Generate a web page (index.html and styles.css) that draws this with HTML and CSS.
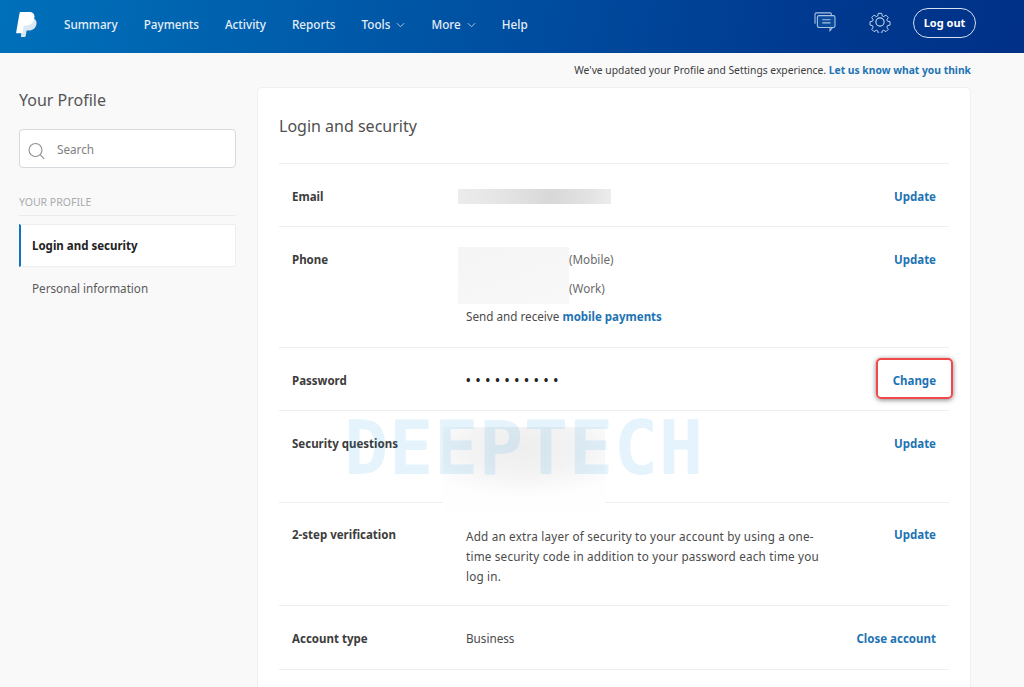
FILE: index.html
```html
<!DOCTYPE html>
<html lang="en">
<head>
<meta charset="utf-8">
<title>Your Profile</title>
<link rel="stylesheet" href="styles.css">
</head>
<body>
<header class="topbar">
  <svg class="logo" viewBox="0 0 22 25" width="22" height="25" aria-hidden="true">
    <path fill="#dbe8f3" d="M7 6h7.500c4 0 6.600 2.200 6 6-.7 4.300-3.700 6.500-7.600 6.500h-2.200L9.600 24.300c-.1.500-.4.700-.9.700H4.900z"/>
    <path fill="#fff" d="M5 0h8c3.600 0 6 2 5.400 5.800-.8 5-4 7.700-8.400 7.700H7.700l-1.100 7c-.1.500-.4.700-.9.700H1c-.6 0-.9-.4-.8-1L3.500 1.200C3.600.4 4.200 0 5 0z"/>
  </svg>
  <nav class="nav">
    <a>Summary</a>
    <a>Payments</a>
    <a>Activity</a>
    <a>Reports</a>
    <a>Tools <svg class="caret" viewBox="0 0 10 6" width="9" height="6"><path d="M1 1l4 4 4-4" fill="none" stroke="#b9cfe6" stroke-width="1"/></svg></a>
    <a>More <svg class="caret" viewBox="0 0 10 6" width="9" height="6"><path d="M1 1l4 4 4-4" fill="none" stroke="#b9cfe6" stroke-width="1"/></svg></a>
    <a>Help</a>
  </nav>
  <div class="tools">
    <svg class="chat" viewBox="0 0 24 22" width="22" height="20" fill="none" stroke="#a9c4e2" stroke-width="1.200" aria-hidden="true">
      <path d="M1 13V2.400C1 1.600 1.600 1 2.400 1h15.200c.8 0 1.400.6 1.400 1.400V4"/>
      <rect x="3.600" y="4" width="19.400" height="13" rx="1.800" fill="#0a4b9b"/>
      <path d="M9 8.500h9M9 12h9"/>
      <path d="M17.500 17v3.500l3-3.500"/>
    </svg>
    <svg class="gear" viewBox="0 0 24 24" width="22" height="22" fill="none" stroke="#c3d6ea" stroke-width="1.200" aria-hidden="true">
      <circle cx="12" cy="12" r="4.500"/>
      <path d="M10 1.500h4l.7 3.100 1.800.8 2.700-1.700 2.800 2.800-1.700 2.700.8 1.800 3.100.7v4l-3.100.7-.8 1.800 1.700 2.700-2.800 2.800-2.700-1.700-1.800.8-.7 3h-4l-.7-3-1.800-.8-2.700 1.700-2.800-2.800 1.700-2.700-.8-1.800-3-.7v-4l3-.7.8-1.800-1.700-2.700 2.800-2.800 2.700 1.700 1.800-.8z" transform="translate(1.200 1.200) scale(.9)"/>
    </svg>
    <a class="logout">Log out</a>
  </div>
</header>

<div class="notice">We've updated your Profile and Settings experience. <a class="link">Let us know what you think</a></div>

<div class="page">
  <aside class="side">
    <h1 class="side-title">Your Profile</h1>
    <div class="search">
      <svg viewBox="0 0 18 18" width="18" height="18" fill="none" stroke="#8f9092" stroke-width="1.100" aria-hidden="true"><circle cx="7.500" cy="8" r="6.500"/><path d="M12.300 12.800l4 4"/></svg>
      <span>Search</span>
    </div>
    <div class="side-head">YOUR PROFILE</div>
    <a class="side-item active">Login and security</a>
    <a class="side-item">Personal information</a>
  </aside>

  <main class="card">
    <h2 class="card-title">Login and security</h2>
    <section class="row r-email">
      <div class="label">Email</div>
      <div class="value"><div class="blur-email"></div></div>
      <a class="link action">Update</a>
    </section>
    <section class="row r-phone">
      <div class="label">Phone</div>
      <div class="value">
        <div class="phones">
          <div class="blur-phone"></div>
          <div class="phone-tags"><span>(Mobile)</span><span>(Work)</span></div>
        </div>
        <div class="send">Send and receive <a class="link">mobile payments</a></div>
      </div>
      <a class="link action">Update</a>
    </section>
    <section class="row r-pass">
      <div class="label">Password</div>
      <div class="value dots">••••••••••</div>
      <a class="link action highlighted">Change</a>
    </section>
    <section class="row r-sec">
      <div class="label">Security questions</div>
      <div class="value"></div>
      <a class="link action">Update</a>
      <div class="blur-sec"></div>
    </section>
    <section class="row r-two">
      <div class="label">2-step verification</div>
      <div class="value para">Add an extra layer of security to your account by using a one-time security code in addition to your password each time you log in.</div>
      <a class="link action">Update</a>
    </section>
    <section class="row r-type">
      <div class="label">Account type</div>
      <div class="value">Business</div>
      <a class="link action">Close account</a>
    </section>
    <div class="watermark">DEEPTECH</div>
  </main>
</div>
</body>
</html>
```
FILE: styles.css
```css
* { box-sizing: border-box; }
html, body { height: 100%; }
body {
  margin: 0;
  height: 687px;
  overflow: hidden;
  background: #f9f9fa;
  font-family: "Noto Sans", "Open Sans", sans-serif;
  font-size: 11.700px;
  color: #4a4a4a;
}
a { color: inherit; text-decoration: none; }

.topbar {
  height: 53px;
  display: flex;
  align-items: center;
  padding-left: 16px;
  background: linear-gradient(100deg, #0070ba 0%, #0059a8 35%, #003c92 75%, #003087 100%);
}
.logo { flex: none; margin-top: -5px; }
.nav {
  display: flex;
  gap: 26px;
  margin-top: -6px;
  margin-left: 26px;
  color: #e6eef7;
  font-weight: 500;
  font-size: 11.700px;
}
.caret { margin-left: 3px; vertical-align: 1px; }
.tools {
  margin-left: auto;
  margin-right: 48px;
  margin-top: -9px;
  display: flex;
  align-items: center;
}
.chat { margin-right: 33px; }
.gear { margin-right: 22px; }
.logout {
  width: 63px;
  height: 30px;
  margin-top: 1px;
  border: 1px solid #d5e2f0;
  border-radius: 15px;
  display: flex;
  align-items: center;
  justify-content: center;
  color: #fff;
  font-weight: 700;
  font-size: 11px;
}

.notice {
  height: 34px;
  padding: 10px 53px 0 0;
  text-align: right;
  font-size: 10.300px;
  line-height: 15px;
  color: #3c3c3c;
}
.link { color: #1d73b4; font-weight: 700; font-size: 11.500px; }
.notice .link { font-size: 10.300px; }

.page {
  display: grid;
  grid-template-columns: 217px 714px;
  column-gap: 21px;
  padding-left: 19px;
}

.side-title {
  margin: 0;
  padding-top: 1px;
  font-size: 16px;
  line-height: 24px;
  font-weight: 400;
  color: #555;
}
.search {
  height: 39px;
  margin-top: 17px;
  background: #fff;
  border: 1px solid #d5dadf;
  border-radius: 4px;
  display: flex;
  align-items: center;
  padding-left: 8px;
  color: #7f8082;
}
.search svg { margin-top: 4px; }
.search span { margin-left: 11px; margin-top: 1px; }
.side-head {
  margin-top: 27px;
  padding-bottom: 5px;
  border-bottom: 1px solid #ececec;
  font-size: 10.500px;
  line-height: 15px;
  color: #a9abad;
}
.side-item {
  display: flex;
  align-items: center;
  height: 41px;
  padding-left: 13px;
  color: #5b5b5b;
}
.side-item.active {
  height: 43px;
  margin-top: 8px;
  background: #fff;
  border: 1px solid #eee;
  border-left: 2px solid #0f75c0;
  padding-left: 11px;
  color: #222;
  font-weight: 700;
  font-size: 11.500px;
}

.card {
  position: relative;
  height: 620px;
  padding: 0 21px;
  background: #fff;
  border: 1px solid #f0f0f0;
  border-radius: 5px 5px 0 0;
}
.card-title {
  margin: 0;
  height: 75px;
  padding-top: 26px;
  font-size: 16px;
  line-height: 24px;
  font-weight: 400;
  color: #505050;
}
.row {
  position: relative;
  display: grid;
  grid-template-columns: 174px 1fr auto;
  align-items: start;
  padding: 23.500px 13px 0;
  border-top: 1px solid #eeeeee;
  line-height: 17px;
}
.label { font-weight: 700; color: #3c3c3c; font-size: 11.500px; }
.action { position: relative; }
.r-email { height: 63px; }
.r-phone { height: 121px; }
.r-pass { height: 63px; }
.r-sec { height: 92px; z-index: 1; }
.r-two { height: 103px; padding-top: 23px; }
.r-type { height: 65px; border-bottom: 1px solid #eee; }

.blur-email {
  width: 153px;
  height: 15px;
  margin: 1.500px 0 0 -8px;
  background: linear-gradient(90deg, #ececec, #e4e4e4 30%, #d8d8d8 60%, #e2e2e2 85%, #ececec);
}
.phones { display: flex; margin: -3.500px 0 0 -8px; }
.blur-phone {
  width: 111px;
  height: 57px;
  background: linear-gradient(160deg, #f4f5f4, #f7f8f7);
}
.phone-tags {
  display: flex;
  flex-direction: column;
  padding-top: 3.500px;
  gap: 12px;
  color: #6a6a6a;
}
.send { margin-top: 4px; }
.dots { font-size: 12px; letter-spacing: 5.200px; color: #222; font-weight: 700; }
.highlighted::after {
  content: "";
  position: absolute;
  left: -17px;
  right: -17px;
  top: -13.500px;
  bottom: -10.500px;
  border: 2.500px solid #f2484c;
  border-radius: 5px;
  box-shadow: 0 1px 5px rgba(0, 0, 0, .5);
}
.blur-sec {
  position: absolute;
  left: 164px;
  top: 16px;
  width: 162px;
  height: 83px;
  background: radial-gradient(ellipse 70% 60% at 50% 25%, #eeeeee 0%, #f3f3f3 50%, #fefefe 100%);
}
.para { max-width: 356px; line-height: 20px; letter-spacing: 0.200px; }
.watermark {
  position: absolute;
  z-index: 2;
  left: 86px;
  top: 317px;
  font-family: "DejaVu Sans Mono", monospace;
  font-weight: 700;
  font-size: 74px;
  line-height: 86px;
  letter-spacing: 0.400px;
  color: rgba(0, 150, 230, .1);
  pointer-events: none;
}
```
